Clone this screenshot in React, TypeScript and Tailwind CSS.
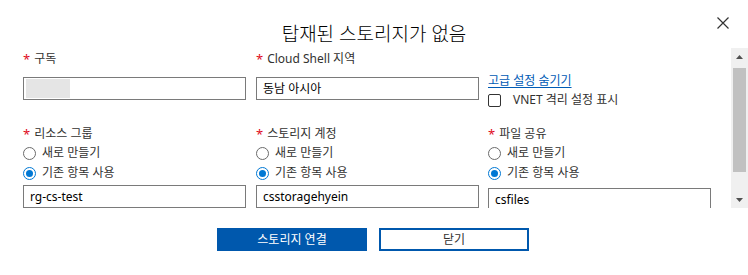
import React from 'react';

const Label = ({ text }: { text: string }) => (
  <div className="h-[18px] leading-[18px] text-[12px] text-[#323130] flex items-center">
    <span className="text-[#e00b1c] mr-[4px] text-[13px]">*</span>
    <span>{text}</span>
  </div>
);

const Radio = ({ checked, text }: { checked?: boolean; text: string }) => (
  <div className="h-[20px] flex items-center gap-[6px] text-[12px] text-[#323130]">
    <span
      className={`w-[13px] h-[13px] rounded-full border flex items-center justify-center bg-white ${
        checked ? 'border-[#0078d4]' : 'border-[#6b6b6b]'
      }`}
    >
      {checked && <span className="w-[7px] h-[7px] rounded-full bg-[#0078d4]" />}
    </span>
    <span>{text}</span>
  </div>
);

const Field = ({ value, children }: { value?: string; children?: React.ReactNode }) => (
  <div className="h-[23px] w-[223px] border border-[#7a7a7a] bg-white flex items-center px-[6px] text-[12px] text-black">
    {value}
    {children}
  </div>
);

const Scrollbar = () => (
  <div className="w-[17px] h-full bg-[#f0f0f0] flex flex-col items-center">
    <div className="h-[17px] w-full flex items-center justify-center">
      <svg width="7" height="4" viewBox="0 0 7 4">
        <path d="M0 4 L3.5 0 L7 4 Z" fill="#505050" />
      </svg>
    </div>
    <div className="flex-1 w-full px-[2px] pt-[3px] pb-[18px]">
      <div className="w-full h-[104px] bg-[#c1c1c1]" />
    </div>
    <div className="h-[17px] w-full flex items-center justify-center">
      <svg width="7" height="4" viewBox="0 0 7 4">
        <path d="M0 0 L7 0 L3.5 4 Z" fill="#505050" />
      </svg>
    </div>
  </div>
);

export default function App() {
  return (
    <div className="w-[748px] h-[275px] bg-white overflow-hidden font-['Noto_Sans','Noto_Sans_CJK_KR',sans-serif]">
      {/* header */}
      <div className="relative h-[48px] flex justify-center pt-[22px]">
        <h1 className="text-[19px] leading-[24px] font-light text-black">탑재된 스토리지가 없음</h1>
        <button className="absolute right-[19px] top-[17px] w-[12px] h-[12px]">
          <svg width="12" height="12" viewBox="0 0 12 12">
            <path d="M0.5 0.5 L11.5 11.5 M11.5 0.5 L0.5 11.5" stroke="#333" strokeWidth="1.2" />
          </svg>
        </button>
      </div>

      {/* scroll area */}
      <div className="h-[160px] flex">
        <div className="flex-1 overflow-hidden pl-[23px] pt-[2px]">
          <div className="grid grid-cols-[223px_223px_223px] gap-x-[10px]">
            <div>
              <Label text="구독" />
              <div className="mt-[9px]">
                <Field>
                  <span className="w-[44px] h-[19px] bg-[#e5e5e5] -ml-[4px]" />
                </Field>
              </div>
            </div>
            <div>
              <Label text="Cloud Shell 지역" />
              <div className="mt-[9px]">
                <Field value="동남 아시아" />
              </div>
            </div>
            <div className="pt-[22px] -ml-[1px]">
              <a className="block h-[18px] leading-[18px] text-[12px] text-[#005bb5] underline underline-offset-2">
                고급 설정 숨기기
              </a>
              <div className="h-[18px] mt-[1px] flex items-center text-[12px] text-[#323130]">
                <span className="w-[13px] h-[13px] border border-[#333] rounded-[2px] bg-white" />
                <span className="ml-[12px]">VNET 격리 설정 표시</span>
              </div>
            </div>

            <div className="mt-[16px]">
              <Label text="리소스 그룹" />
              <Radio text="새로 만들기" />
              <Radio checked text="기존 항목 사용" />
              <div className="mt-[2px]">
                <Field value="rg-cs-test" />
              </div>
            </div>
            <div className="mt-[16px]">
              <Label text="스토리지 계정" />
              <Radio text="새로 만들기" />
              <Radio checked text="기존 항목 사용" />
              <div className="mt-[2px]">
                <Field value="csstoragehyein" />
              </div>
            </div>
            <div className="mt-[16px] -ml-[1px]">
              <Label text="파일 공유" />
              <Radio text="새로 만들기" />
              <Radio checked text="기존 항목 사용" />
              <div className="mt-[5px]">
                <Field value="csfiles" />
              </div>
            </div>
          </div>
        </div>
        <Scrollbar />
      </div>

      {/* footer */}
      <div className="flex justify-center gap-[12px] pt-[20px] pr-[2px]">
        <button className="w-[150px] h-[23px] bg-[#0058ad] text-white text-[12px]">스토리지 연결</button>
        <button className="w-[150px] h-[23px] border-2 border-[#0058ad] bg-white text-[#323130] text-[12px]">
          닫기
        </button>
      </div>
    </div>
  );
}
